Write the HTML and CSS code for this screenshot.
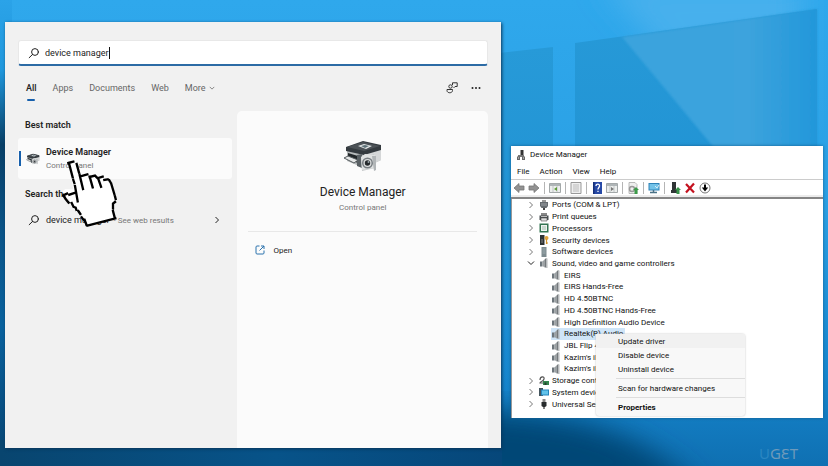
FILE: index.html
```html
<!DOCTYPE html>
<html lang="en">
<head>
<meta charset="utf-8">
<meta name="viewport" content="width=device-width, initial-scale=1">
<title>Device Manager</title>
<link rel="stylesheet" href="styles.css">
</head>
<body>
<svg class="defs" aria-hidden="true">
  <defs>
    <symbol id="search" viewBox="0 0 12 12"><g fill="none" stroke="currentColor" stroke-linecap="round"><circle cx="7" cy="5" r="3.4"/><path d="M4.5 7.5 1.2 10.7"/></g></symbol>
    <symbol id="chev" viewBox="0 0 8 8"><path d="M2.5 1 5.5 4 2.5 7" fill="none" stroke="currentColor"/></symbol>
    <symbol id="chev-down" viewBox="0 0 8 8"><path d="M1 2.5 4 5.5 7 2.5" fill="none" stroke="currentColor"/></symbol>
    <symbol id="printer" viewBox="0 0 40 32">
      <path d="M4 8v13l17 7 17-8V8z" fill="#b6babb"/>
      <path d="M21 13v15l17-8V7z" fill="#d5d7d8"/>
      <path d="M3 7 20 1l18 4v5l-17 5L3 11z" fill="#343a3f"/>
      <path d="m4 7 16-5 17 4-16 5z" fill="#4b5156"/>
      <path d="m15 6 6-2 8 2-6 3z" fill="#e4e7e8"/><path d="m18 6 4-1 4 1-4 2z" fill="#5c7077"/>
      <path d="M5 13l10 3v7L5 19z" fill="#22272a"/><path d="m1 18 4-2 10 4-4 3z" fill="#e5e7e7" stroke="#555b5e"/>
      <path d="M14 15l5-1v14l-5-2z" fill="#596064"/>
      <path d="m18 17 13-3 1 14-13 3z" fill="#c4c7c8"/><path d="m18 17 4-3 10 1-1 13-12 2z" fill="#dfe1e1"/>
      <circle cx="24.500" cy="23" r="5.500" fill="#767c80"/><circle cx="24.500" cy="23" r="4" fill="#dadcdc"/><circle cx="24.500" cy="23" r="2.700" fill="#25292c"/><circle cx="25.500" cy="22" r="1" fill="#9ba6ab"/>
      <path d="M29 16h4v14l-2 1z" fill="#b1b5b7"/>
    </symbol>
    <symbol id="speaker" viewBox="0 0 10 10"><path d="M1 3.500h2.500v5H1z" fill="#6c757b"/><path d="M3.500 3.500 6.500 .5v9.500l-3-2z" fill="#9ca1a4"/><path d="M6 1 7.500 0v10L6 9z" fill="#74797c"/><path d="M8 .5v9.500" stroke="#b5b8ba"/></symbol>
    <symbol id="port" viewBox="0 0 10 10"><path d="M3 0h4v2H3z" fill="#999"/><path d="M1 2h8v4L7.500 8h-5L1 6z" fill="#666c70"/><path d="M3 3v3m2-3v3m2-3v3" stroke="#b9bcbe" stroke-width=".7"/><path d="M4 8h2v2H4z" fill="#444"/></symbol>
    <symbol id="print" viewBox="0 0 10 10"><path d="M2 1h6v3H2z" fill="#888"/><path d="M.5 3.500h9V8h-9z" fill="#454b4e"/><path d="M2 6h6v3H2z" fill="#ddd" stroke="#555" stroke-width=".6"/><path d="M2 4.500h6" stroke="#bbb"/></symbol>
    <symbol id="cpu" viewBox="0 0 10 10"><path d="M.5.5h9v9h-9z" fill="#327451"/><path d="M2 2h6v6H2z" fill="#edf3ef"/><path d="M3 3h4v4H3z" fill="#c8d8ce"/></symbol>
    <symbol id="lock" viewBox="0 0 10 10"><path d="M1 0h4.500v10H1z" fill="#2f3334"/><path d="M2 5h2M2 7h2" stroke="#aaa" stroke-width=".7"/><circle cx="7.500" cy="3" r="2" fill="#e0a43d"/><path d="M7.500 4v5M7.500 8H9" stroke="#d19329" stroke-width="1.200"/></symbol>
    <symbol id="soft" viewBox="0 0 10 10"><path d="M2.500 0h5v10h-5z" fill="#7d8b8f"/><path d="M3.500 2h3m-3 2h3m-3 2h3" stroke="#aab9bd" stroke-width=".7"/></symbol>
    <symbol id="storage" viewBox="0 0 10 10"><path d="M1 4C1 0 6 0 5 3S1 5 1 7h4" fill="none" stroke="#555" stroke-width="1.200"/><path d="M4 5h6v4H4z" fill="#34854e"/><path d="M5.500 6.500h2V9h-2z" fill="#263d2c"/></symbol>
    <symbol id="system" viewBox="0 0 10 10"><path d="M0 1h4v8H0z" fill="#44555e"/><path d="M2 2.500h8v6H2z" fill="#2585bd"/><path d="M3 3.500h6v4H3z" fill="#61c2e9"/></symbol>
    <symbol id="usb" viewBox="0 0 10 10"><path d="M3.500 0h3v3h-3z" fill="#888"/><path d="M2.500 3h5v4L6 8H4L2.500 7z" fill="#292c2e"/><path d="M5 8v2" stroke="#333" stroke-width="1.200"/></symbol>
    <symbol id="arrow" viewBox="0 0 12 12"><path d="m1 6 5-4.500v2.500h5v4H6v2.500z" fill="#929292" stroke="#777" stroke-width=".8"/></symbol>
    <symbol id="panel" viewBox="0 0 12 12"><path d="M.5 1.500h11v9H.5z" fill="#eceeed" stroke="#a3a8a9"/><path d="M1 3h10" stroke="#9ba2a4" stroke-width="1.500"/><path d="M4 4v6m4-6v6" stroke="#c0c5c6"/></symbol>
  </defs>
</svg>

<svg class="wallpaper" viewBox="0 0 828 466" preserveAspectRatio="none" aria-hidden="true">
  <defs>
    <linearGradient id="sky" x1="0" y1="0" x2="0" y2="1"><stop offset="0" stop-color="#2fa8ec"/><stop offset=".45" stop-color="#2a9fe3"/><stop offset=".8" stop-color="#1686ce"/><stop offset="1" stop-color="#0f70b2"/></linearGradient>
    <linearGradient id="left" x1="0" y1="0" x2="0" y2="1"><stop offset="0" stop-color="#2ba3e8"/><stop offset=".15" stop-color="#2098dd"/><stop offset=".31" stop-color="#083f66"/><stop offset=".5" stop-color="#0a5488"/><stop offset=".7" stop-color="#09629e"/><stop offset="1" stop-color="#074370"/></linearGradient>
    <linearGradient id="floor" x1="0" y1="0" x2="1" y2="0"><stop offset="0" stop-color="#08456f"/><stop offset=".55" stop-color="#075389"/><stop offset="1" stop-color="#06477a"/></linearGradient>
    <linearGradient id="pane" x1="0" y1="0" x2="1" y2="0"><stop offset="0" stop-color="#3aa3dd"/><stop offset=".65" stop-color="#3ca3dd"/><stop offset="1" stop-color="#2297da"/></linearGradient>
    <linearGradient id="glass" x1="0" y1="0" x2="0" y2="1"><stop offset="0" stop-color="#279ad8"/><stop offset=".5" stop-color="#2092d3"/><stop offset="1" stop-color="#1686ce" stop-opacity="0"/></linearGradient>
    <filter id="soften" x="-20%" y="-20%" width="140%" height="140%"><feGaussianBlur stdDeviation="14"/></filter>
    <filter id="edge"><feGaussianBlur stdDeviation="1"/></filter>
  </defs>
  <path d="M0 0h828v466H0z" fill="url(#sky)"/>
  <path d="M600 -20h200v150H730z" fill="#46b0ed" filter="url(#soften)"/>
  <path d="M500 53 553 47V420H500z" fill="url(#glass)"/>
  <path d="M575 43 817 9V420H575z" fill="url(#glass)"/>
  <path d="M622 37 817 9V150H716z" fill="url(#pane)" filter="url(#edge)"/>
  <path d="M440 408C580 412 640 430 700 490H440z" fill="#064676" filter="url(#soften)"/>
  <path d="M0 0h12v466H0z" fill="url(#left)"/>
  <path d="M0 440h502v26H0z" fill="url(#floor)"/>
</svg>

<main class="desktop">
  <section class="start" aria-label="Search">
    <label class="searchbox">
      <svg class="ico12"><use href="#search"/></svg>
      <input type="text" value="device manager" size="10" aria-label="Type here to search"><span class="caret"></span>
    </label>
    <nav class="tabs">
      <button class="tab active">All</button>
      <button class="tab">Apps</button>
      <button class="tab">Documents</button>
      <button class="tab">Web</button>
      <button class="tab">More <svg class="ico6"><use href="#chev-down"/></svg></button>
      <button class="tool" aria-label="Account"><svg class="ico12" viewBox="0 0 12 12" fill="none" stroke="#333"><path d="M6.500 3V.8h4.700v3.700H9L7.500 6"/><circle cx="4.500" cy="4.500" r="1.700"/><path d="M1 7.500h5.500v1c0 3-5.500 3-5.500 0z"/></svg></button>
      <button class="tool" aria-label="Options"><svg class="ico12" viewBox="0 0 12 12" fill="#222"><circle cx="2.500" cy="6" r="1"/><circle cx="6" cy="6" r="1"/><circle cx="9.500" cy="6" r="1"/></svg></button>
    </nav>
    <div class="body">
      <div class="results">
        <h2>Best match</h2>
        <button class="best">
          <svg class="ico14"><use href="#printer"/></svg>
          <span><strong>Device Manager</strong><small>Control panel</small></span>
        </button>
        <h2>Search the web</h2>
        <button class="web">
          <svg class="ico12"><use href="#search"/></svg>
          <span>device manager</span><small>- See web results</small>
          <svg class="ico8 end"><use href="#chev"/></svg>
        </button>
      </div>
      <article class="detail">
        <svg class="hero"><use href="#printer"/></svg>
        <h1>Device Manager</h1>
        <p>Control panel</p>
        <hr>
        <button class="open"><svg class="ico10" viewBox="0 0 10 10" fill="none" stroke="#2b72ad"><path d="M4.500 1H2C1.400 1 1 1.400 1 2v6c0 .6.400 1 1 1h6c.6 0 1-.4 1-1V5.500M6 1h3v3M9 1 4.500 5.500"/></svg>Open</button>
      </article>
    </div>
    <svg class="hand" viewBox="0 0 198 228" aria-hidden="true">
      <path d="M38 22 55 16l7 7 12 36 18-4 12 4 8-1 14 6 10-1 16 8 11 16 13 45v22l-7 14 5 19-80 21-9-22-16-14-8-17-14-10-8-16-10-6-9-17 7-6 25 0z" fill="#fff"/>
      <g fill="none" stroke="#000" stroke-width="7" stroke-linecap="square">
        <path d="M37 21 52 17M40 26l10 38M52 72l3 9M57 90l8 46M62 24l7 26M71 57l10 42M76 60l18-5M101 62l9 32M101 63l16-4 6 6M128 72l7 20M126 66l14-4M145 72l10-2M160 73l3 5M166 84l9 30M177 121l2 8M177 138l-6 5v14M171 165l5 19M178 187l-84 22M91 206l-5-14M82 191l-5-7M73 174l-6-9M61 161l-2-6-5-2M51 149l-4-8M38 140l-5-6M29 129l-7-11M22 118l11-5M40 116l15-5"/>
      </g>
    </svg>
  </section>

  <section class="devmgr" aria-label="Device Manager">
    <header class="title"><svg class="ico10" viewBox="0 0 10 10"><path d="M4.500 0h3v5h-3z" fill="#333"/><path d="M2 5h6v2H2z" fill="#777"/><path d="M1 6.500h3V10H1zm5 0h3V10H6z" fill="#666"/><path d="M2 8h1m4 0h1" stroke="#ddd"/></svg>Device Manager</header>
    <nav class="menubar"><button>File</button><button>Action</button><button>View</button><button>Help</button></nav>
    <div class="toolbar">
      <button aria-label="Back"><svg class="ico12"><use href="#arrow"/></svg></button>
      <button aria-label="Forward"><svg class="ico12 flip"><use href="#arrow"/></svg></button>
      <i></i>
      <button aria-label="Show tree"><svg class="ico12"><use href="#panel"/><path d="m8 5-3 2 3 2z" fill="#5c9c35"/></svg></button>
      <i></i>
      <button aria-label="Properties"><svg class="ico12" viewBox="0 0 12 12"><path d="M1 .5h10v11H1z" fill="#eee" stroke="#999"/><path d="M3 3h6M3 5h6M3 7h6M3 9h6" stroke="#bbb"/></svg></button>
      <i></i>
      <button aria-label="Help"><svg class="ico12" viewBox="0 0 12 12"><path d="M2 0h9v12H2z" fill="#2749a6"/><path d="M2 0h1.500v12H2z" fill="#152f78"/><path d="M5 4c0-2.500 3.800-2.500 3.500 0C8.500 5.500 7 5.500 7 7.500M7 8.700V10" fill="none" stroke="#fff" stroke-width="1.300"/></svg></button>
      <button aria-label="Actions"><svg class="ico12"><use href="#panel"/><path d="m5 5 3 2-3 2z" fill="#777"/></svg></button>
      <i></i>
      <button aria-label="Scan"><svg class="ico12" viewBox="0 0 12 12"><path d="M2 .5h6l2 2v9H2z" fill="#eee" stroke="#aaa" stroke-width=".8"/><circle cx="5" cy="7" r="2.500" fill="none" stroke="#999" stroke-width="1.500"/><path d="m9 5 3 3h-1.500v4h-3V8H6z" fill="#3c9b49"/></svg></button>
      <i></i>
      <button aria-label="Update"><svg class="ico12" viewBox="0 0 12 12"><path d="M.5 1h11v7.500H.5z" fill="#2e83b8"/><path d="M1.500 2h9v5.500h-9z" fill="#72c2e8"/><path d="M2 10.500h7M5.500 8v3" stroke="#4b7388" stroke-width="1.500"/><path d="m7 4 2 2 2-3" stroke="#d5edf7" fill="none"/></svg></button>
      <i></i>
      <button aria-label="Add driver"><svg class="ico12" viewBox="0 0 12 12"><path d="M3 0h4v8h2v3H2V8h1z" fill="#303536"/><path d="m9 5 3 3h-1.500v4h-3V8H6z" fill="#38934a"/></svg></button>
      <button aria-label="Uninstall"><svg class="ico12" viewBox="0 0 12 12"><path d="m2 2 8 8.500M10 1.500 2 10.500" stroke="#c4121f" stroke-width="2.200"/></svg></button>
      <button aria-label="Disable"><svg class="ico12" viewBox="0 0 12 12"><circle cx="6" cy="6" r="5" fill="#fff" stroke="#777"/><path d="M6 2.500v4" stroke="#000" stroke-width="2"/><path d="M2.800 5.500h6.400L6 9.500z"/></svg></button>
    </div>
    <ul class="tree">
      <li><svg class="ico8"><use href="#chev"/></svg><svg class="ico10"><use href="#port"/></svg><span>Ports (COM &amp; LPT)</span></li>
      <li><svg class="ico8"><use href="#chev"/></svg><svg class="ico10"><use href="#print"/></svg><span>Print queues</span></li>
      <li><svg class="ico8"><use href="#chev"/></svg><svg class="ico10"><use href="#cpu"/></svg><span>Processors</span></li>
      <li><svg class="ico8"><use href="#chev"/></svg><svg class="ico10"><use href="#lock"/></svg><span>Security devices</span></li>
      <li><svg class="ico8"><use href="#chev"/></svg><svg class="ico10"><use href="#soft"/></svg><span>Software devices</span></li>
      <li class="expanded"><svg class="ico8"><use href="#chev-down"/></svg><svg class="ico10"><use href="#speaker"/></svg><span>Sound, video and game controllers</span></li>
      <li class="child"><svg class="ico10"><use href="#speaker"/></svg><span>EIRS</span></li>
      <li class="child"><svg class="ico10"><use href="#speaker"/></svg><span>EIRS Hands-Free</span></li>
      <li class="child"><svg class="ico10"><use href="#speaker"/></svg><span>HD 4.50BTNC</span></li>
      <li class="child"><svg class="ico10"><use href="#speaker"/></svg><span>HD 4.50BTNC Hands-Free</span></li>
      <li class="child"><svg class="ico10"><use href="#speaker"/></svg><span>High Definition Audio Device</span></li>
      <li class="child selected"><svg class="ico10"><use href="#speaker"/></svg><span>Realtek(R) Audio</span></li>
      <li class="child"><svg class="ico10"><use href="#speaker"/></svg><span>JBL Flip 4</span></li>
      <li class="child"><svg class="ico10"><use href="#speaker"/></svg><span>Kazim's il</span></li>
      <li class="child"><svg class="ico10"><use href="#speaker"/></svg><span>Kazim's il</span></li>
      <li><svg class="ico8"><use href="#chev"/></svg><svg class="ico10"><use href="#storage"/></svg><span>Storage cont</span></li>
      <li><svg class="ico8"><use href="#chev"/></svg><svg class="ico10"><use href="#system"/></svg><span>System devic</span></li>
      <li><svg class="ico8"><use href="#chev"/></svg><svg class="ico10"><use href="#usb"/></svg><span>Universal Ser</span></li>
    </ul>
    <div class="context">
      <button class="hover">Update driver</button>
      <button>Disable device</button>
      <button>Uninstall device</button>
      <hr>
      <button>Scan for hardware changes</button>
      <hr>
      <button class="default">Properties</button>
    </div>
  </section>
  <div class="mark"><span>U</span>GƐT</div>
</main>
</body>
</html>
```
FILE: styles.css
```css
* { box-sizing: border-box; }
body { margin: 0; font-family: Roboto, "Open Sans", sans-serif; font-size: 9px; color: #222; }
h1, h2, p, ul { margin: 0; padding: 0; font-weight: 400; }
button { border: 0; padding: 0; margin: 0; background: none; font: inherit; color: inherit; text-align: left; }
svg { display: block; flex: none; }
.defs { position: absolute; width: 0; height: 0; }
.ico6 { width: 6px; height: 6px; }
.ico8 { width: 8px; height: 8px; }
.ico10 { width: 10px; height: 10px; }
.ico12 { width: 12px; height: 12px; }
.ico14 { width: 14px; height: 14px; }
.flip { transform: scaleX(-1); }

.wallpaper { position: absolute; inset: 0; width: 100%; height: 100%; }
.desktop { position: relative; display: grid; grid-template-columns: 496fr 312fr; gap: 10px; min-height: 100vh; padding: 22px 5px 18px; overflow: hidden; }

.start { position: relative; display: flex; flex-direction: column; background: #f1f1f1; padding: 18px 13px 0; box-shadow: 1px 1px 3px #0a365a; }
.searchbox { display: flex; align-items: center; height: 26px; padding: 0 9px; background: #fff; border: 1px solid #e8e8e8; border-bottom: 2px solid #2c6ba5; border-radius: 3px; }
.searchbox input { field-sizing: content; border: 0; outline: 0; padding: 0; margin-left: 5px; background: none; font: inherit; color: #222; }
.caret { width: 1px; height: 12px; background: #111; }
.tabs { display: flex; align-items: center; gap: 16px; height: 36px; margin-top: 4px; padding: 0 6px 0 8px; color: #666; }
.tab { display: flex; align-items: center; gap: 3px; height: 26px; }
.active { position: relative; font-weight: 500; color: #222; }
.active::after { content: ""; position: absolute; bottom: 0; left: 1px; width: 8px; height: 2px; border-radius: 1px; background: #1760ac; }
.tool + .tool { margin-left: -4px; }
.tab + .tool { margin-left: auto; }
.body { flex: 1; display: grid; grid-template-columns: 214fr 250fr; gap: 5px; margin-top: 5px; }
h2 { font-size: 9px; font-weight: 600; line-height: 14px; padding-left: 7px; }
.results { padding-top: 7px; }
.results small, .detail p { font-size: 8px; color: #777; }
.best { position: relative; display: flex; align-items: center; gap: 6px; width: 100%; height: 41px; margin: 6px 0 8px; padding-left: 8px; background: #fbfbfb; border-radius: 3px; }
.best::before { content: ""; position: absolute; left: 1px; top: 13px; width: 2px; height: 15px; background: #1760ac; }
.best strong, .best small { display: block; line-height: 13px; }
.best strong { font-weight: 600; }
.web { display: flex; align-items: center; gap: 4px; width: 100%; height: 38px; padding: 0 11px 0 10px; }
.web span { margin-left: 2px; }
.end { margin-left: auto; }
.detail { display: flex; flex-direction: column; align-items: center; background: #fbfbfb; border-radius: 5px 5px 0 0; padding: 29px 11px 0; }
.hero { width: 40px; height: 32px; }
h1 { font-size: 12px; line-height: 18px; margin-top: 11px; }
.detail p { line-height: 12px; margin-top: 1px; }
.detail hr { width: 100%; margin: 17px 0 11px; border: 0; border-top: 1px solid #e8e8e8; }
.open { display: flex; align-items: center; align-self: flex-start; gap: 8px; height: 14px; margin-left: 7px; font-size: 8px; }
.hand { position: absolute; left: 51px; top: 134px; width: 66px; height: 76px; }

.devmgr { position: relative; display: flex; flex-direction: column; margin: 124px 0 30px; background: #fff; font-size: 8px; color: #111; box-shadow: 0 0 3px #175f91; }
.title { display: flex; align-items: center; gap: 4px; height: 17px; padding-left: 5px; }
.menubar { display: flex; align-items: center; gap: 10px; height: 16px; padding-left: 6px; }
.toolbar { display: flex; align-items: center; gap: 3px; height: 20px; padding: 0 2px 2px; border-top: 1px solid #ccc; border-bottom: 2px solid #858585; background: linear-gradient(#fff 15px, #ececec 15px); }
.toolbar i { width: 1px; height: 12px; margin: 0 1px; background: #b5b5b5; }
.tree { flex: 1; display: grid; grid-auto-rows: 1fr; list-style: none; padding: 0 0 8px 15px; border-left: 1px solid #999; }
.tree li { display: flex; align-items: center; line-height: 11px; color: #111; }
.tree .ico8 { margin-right: 4px; color: #777; }
.tree span { padding: 0 2px; margin-left: 1px; white-space: nowrap; }
.tree .expanded .ico8 { color: #222; }
.tree .child { margin-left: 24px; }
.tree .selected { justify-self: start; background: #cfe5f8; }
.context { position: absolute; left: 85px; top: 188px; width: 149px; padding-bottom: 2px; background: #f8f8f8; border-radius: 3px; box-shadow: 0 0 2px #bbb; }
.context button { display: block; width: 100%; height: 14px; padding-left: 22px; line-height: 15px; }
.context .hover { background: #f1f1f1; }
.context .default { font-weight: 700; }
.context hr { margin: 2px 0 2px 20px; border: 0; border-top: 1px solid #ddd; }
.mark { position: absolute; right: 30px; bottom: 4px; font: 15px/18px "Noto Sans", sans-serif; color: #6d9abb; }
.mark span { color: #2a86c2; }
```
